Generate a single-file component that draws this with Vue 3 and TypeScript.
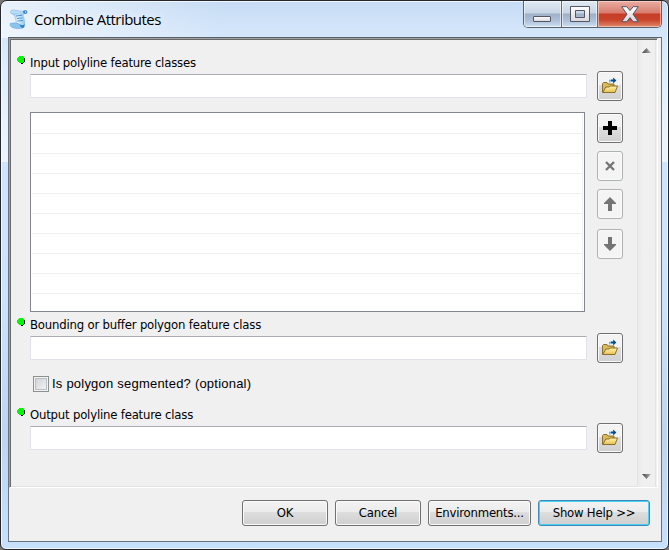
<script setup lang="ts">
import { ref } from 'vue'

interface Field {
  id: string
  label: string
}

const fields: Record<string, Field> = {
  input: { id: 'input', label: 'Input polyline feature classes' },
  bounds: { id: 'bounds', label: 'Bounding or buffer polygon feature class' },
  output: { id: 'output', label: 'Output polyline feature class' },
}
const segmented = ref(false)
const rows = Array.from({ length: 10 }, (_, i) => i)
</script>

<template>
  <svg class="defs" aria-hidden="true">
    <defs>
      <linearGradient id="gold" x1="0" y1="0" x2="0" y2="1">
        <stop offset="0" stop-color="#fff3b0" />
        <stop offset="1" stop-color="#e6c052" />
      </linearGradient>
      <linearGradient id="paper" x1="0" y1="0" x2="1" y2="0">
        <stop offset="0" stop-color="#8cc4ef" />
        <stop offset=".45" stop-color="#e2f3fd" />
        <stop offset="1" stop-color="#8fc4ee" />
      </linearGradient>
      <linearGradient id="glyph" x1="0" y1="0" x2="0" y2="1">
        <stop offset="0" stop-color="#ffffff" />
        <stop offset="1" stop-color="#d8d8dc" />
      </linearGradient>
      <linearGradient id="thumb" x1="0" y1="0" x2="1" y2="0">
        <stop offset="0" stop-color="#404040" />
        <stop offset="1" stop-color="#b5b5b5" />
      </linearGradient>
      <symbol id="folder" viewBox="0 0 18 18">
        <path d="M1.5 15.5V6.5l1-1h3.5l1 1.5h6v2.5" fill="#d9bb5c" stroke="#80651f" stroke-width=".9" />
        <path d="M1.8 15.5l3-5.5h3.4l1-1h7.3l-2.5 6.5z" fill="url(#gold)" stroke="#80651f" stroke-width=".9" />
        <path d="M8.7 5.5V3.5h1.5" fill="none" stroke="#54b6ea" stroke-width="1.3" />
        <path d="M10 2.6h2.2V.4l3.2 3-3.2 3V4.4H10z" fill="#064b8b" />
      </symbol>
      <symbol id="dot" viewBox="0 0 9 9">
        <path d="M3 1h4v1h1v4H7v1H6v1H4V7H3z" fill="#101010" />
        <path d="M2 0h4v1h1v5H6v1H2V6H1V5H0V2h1V1h1z" fill="#00f800" />
      </symbol>
    </defs>
  </svg>
  <main class="window">
    <header class="titlebar">
      <svg class="script-icon" viewBox="0 0 20 22">
        <path d="M3.5 5.5L15 3.5q-1.5 5 .5 9 1 5-1 7H6q2-2 1-6.500Q6.500 8 3.500 5.500z" fill="url(#paper)" stroke="#85b9e4" stroke-width=".5" />
        <path d="M1.500 3.500Q2 1.500 4.500 2L14 3.500q1.500 2-.5 2.500L4 6Q1 6 1.500 3.500z" fill="#b9ddf7" stroke="#74abdc" stroke-width=".5" />
        <path d="M14.500 2.500q3-1 3.800.8.500 2.700-2.300 2.700-2.500-.5-1.500-3.500z" fill="#2f7dca" />
        <path d="M15.800 3.500q1-.6 1.600.2.200 1-.8 1.200-.9-.2-.8-1.400z" fill="#cfe9fb" />
        <path d="M1 15.500q5-1.500 9.500.5 1 2.500 3.500 4-6 1.500-11-.5-2.500-1.500-2-4z" fill="#8cc3ee" stroke="#6aa4d8" stroke-width=".5" />
        <path d="M10.500 16q.5 3 3.500 4 2-1 1.500-4-1.500 2.500-5 0z" fill="#2f7dca" />
        <path d="M7 8l6-.7M8 10.500l5.500-.6M8.500 13l5.500-.5" stroke="#4b90cf" stroke-width="1" />
      </svg>
      <h1>Combine Attributes</h1>
      <div class="controls">
        <span class="control min">
          <svg width="19" height="7" viewBox="0 0 19 7"><rect x=".5" y=".5" width="17" height="5" rx=".5" fill="url(#glyph)" stroke="#535666" /></svg>
        </span>
        <span class="control max">
          <svg width="20" height="17" viewBox="0 0 20 17"><path fill-rule="evenodd" d="M.5.5h19v15H.5zM5.5 4.5v7h9v-7z" fill="url(#glyph)" stroke="#535666" /></svg>
        </span>
        <span class="control close">
          <svg width="18" height="17" viewBox="0 0 18 17"><path d="M.7.7h5.100L9 4.600 12.200.7h5.100L12 8.200l5.300 7.500h-5.100L9 11.600l-3.200 4.100H.7L6 8.200z" fill="url(#glyph)" stroke="#535666" stroke-linejoin="round" /></svg>
        </span>
      </div>
    </header>

    <section class="client">
      <div class="panel">
        <div class="form">
          <div class="label"><svg class="dot"><use href="#dot" /></svg><span>{{ fields.input.label }}</span></div>
          <div class="field">
            <input type="text" :aria-label="fields.input.label" />
            <button class="tool"><svg class="folder"><use href="#folder" /></svg></button>
          </div>
          <div class="list-row">
            <div class="list"><div v-for="r in rows" :key="r" class="row"></div></div>
            <div class="tools">
              <button class="tool"><svg width="14" height="14" viewBox="0 0 14 14"><path d="M5 0h4v5h5v4H9v5H5V9H0V5h5z" fill="#000" /></svg></button>
              <button class="tool off"><svg width="10" height="10" viewBox="0 0 10 10"><path d="M1 1l8 8M9 1L1 9" stroke="#747474" stroke-width="2.3" /></svg></button>
              <button class="tool off"><svg width="12" height="14" viewBox="0 0 12 14"><path d="M6 0l6 6v1H8v7H4V7H0V6z" fill="#747474" /></svg></button>
              <button class="tool off last"><svg width="12" height="14" viewBox="0 0 12 14"><path d="M4 0h4v7h4v1l-6 6-6-6V7h4z" fill="#747474" /></svg></button>
            </div>
          </div>
          <div class="label second"><svg class="dot"><use href="#dot" /></svg><span>{{ fields.bounds.label }}</span></div>
          <div class="field">
            <input type="text" :aria-label="fields.bounds.label" />
            <button class="tool"><svg class="folder"><use href="#folder" /></svg></button>
          </div>
          <label class="check">
            <input v-model="segmented" type="checkbox" />
            <span>Is polygon segmented? (optional)</span>
          </label>
          <div class="label third"><svg class="dot"><use href="#dot" /></svg><span>{{ fields.output.label }}</span></div>
          <div class="field">
            <input type="text" :aria-label="fields.output.label" />
            <button class="tool"><svg class="folder"><use href="#folder" /></svg></button>
          </div>
        </div>
        <div class="scroll">
          <svg width="9" height="5" viewBox="0 0 9 5"><path d="M0 5l4.5-5L9 5z" fill="url(#thumb)" /></svg>
          <svg width="9" height="5" viewBox="0 0 9 5"><path d="M0 0l4.5 5L9 0z" fill="url(#thumb)" /></svg>
        </div>
      </div>
      <footer>
        <button class="btn ok"><span>OK</span></button>
        <button class="btn cancel"><span>Cancel</span></button>
        <button class="btn env"><span>Environments...</span></button>
        <button class="btn help"><span>Show Help &gt;&gt;</span></button>
      </footer>
    </section>
  </main>
</template>

<style>
body { overflow: hidden; background: #777; }
</style>

<style scoped>
* { box-sizing: border-box; }
.defs { position: absolute; width: 0; height: 0; }
.window {
  width: 669px; height: 550px; padding: 0 6px 6px 7px;
  border: 1px solid #24282e; border-radius: 7px 7px 6px 6px;
  display: flex; flex-direction: column;
  background:
    linear-gradient(90deg, rgba(255,255,255,.6), transparent 220px) 0 0 / 100% 37px no-repeat,
    linear-gradient(180deg, transparent 0, rgba(238,245,252,.85) 120px, rgba(240,246,252,.9) 161px, transparent 161px),
    linear-gradient(180deg, #c6dcf4 0, #d1e6fd 60px, #cce3fc 300px, #bdd5ef 430px, #c7e0fb 100%);
  box-shadow: inset 0 0 0 1px rgba(255,255,255,.75);
}
.titlebar { height: 36px; display: flex; align-items: flex-start; flex: none; }
.script-icon { width: 20px; height: 22px; margin: 7px 0 0 1px; }
h1 { margin: 8px 0 0 5px; font: 400 15px/21px "Open Sans", "Noto Sans", sans-serif; letter-spacing: -.52px; color: #000; white-space: nowrap; text-shadow: 0 0 8px #fff; }
.controls { display: flex; width: 139px; height: 27px; margin-left: auto; border: 1px solid #596273; border-top: 0; border-radius: 0 0 5px 5px; overflow: hidden; }
.control { height: 26px; display: flex; justify-content: center; border-right: 1px solid #626c7d; background: linear-gradient(#e0eaf5 0, #c7d4e3 12px, #9fb0c6 13px, #afc2da 20px, #cfe0f1); box-shadow: inset 0 0 0 1px rgba(255,255,255,.55); }
.min { width: 38px; padding-top: 15px; }
.max { width: 36px; padding-top: 5px; }
.close { width: 63px; padding-top: 5px; border-right: 0; background: linear-gradient(#e9aea5 0, #d87b6d 12px, #c63c26 13px, #c9452c 19px, #df8b70); box-shadow: inset 0 0 0 1px rgba(255,220,205,.6); }
.control svg { display: block; flex: none; }

.client { height: 505px; width: 654px; border: 1px solid #6b7480; border-top-color: #59616b; background: #f0f0f0; color: #000; }
.panel { height: 450px; width: 649px; padding: 1px 0 0 1px; display: flex; border: 1px solid #fff; border-top-color: #a0a0a0; border-left-color: #a0a0a0; box-shadow: inset 1px 1px #696969, inset 0 -1px #e3e3e3; }
.form { width: 626px; flex: none; padding: 14px 0 0 6px; }
.label { height: 17px; display: flex; align-items: flex-start; font: 13px/17px "DejaVu Sans Condensed", "DejaVu Sans", sans-serif; letter-spacing: -.2px; white-space: nowrap; }
.label span { margin-left: 4px; }
.dot { width: 9px; height: 9px; flex: none; margin-top: 2px; }
.field { height: 30px; padding-left: 13px; display: flex; align-items: center; gap: 10px; }
.field input { width: 557px; height: 24px; padding: 0 4px; border: 1px solid #e2e3ea; border-top-color: #abadb3; border-radius: 1px; background: #fff; outline: none; }
.tool { width: 26px; height: 30px; padding: 0; display: flex; align-items: center; justify-content: center; flex: none; border: 1px solid #707070; border-radius: 3px; background: linear-gradient(#f3f3f3 0 47%, #dedede 48%, #d0d0d0); box-shadow: inset 0 0 0 1px #fafafa; }
.folder { width: 18px; height: 18px; }
.tool.off { border-color: #adb2b5; background: #f4f4f4; }
.list-row { height: 200px; margin-top: 11px; padding-left: 13px; display: flex; gap: 12px; }
.list { width: 555px; height: 200px; padding: 1px 1px 0 1px; border: 1px solid #828790; background: #fff; overflow: hidden; }
.row { height: 20px; border-bottom: 1px solid #f0f0f0; border-right: 1px solid #f0f0f0; }
.tools { padding-top: 1px; display: flex; flex-direction: column; gap: 8px; }
.tools .last { margin-top: 2px; }
.second { margin-top: 4px; }
.check { height: 17px; margin: 12px 0 0 16px; display: flex; align-items: center; font: 13px/17px "Liberation Sans", Arial, sans-serif; letter-spacing: .22px; white-space: nowrap; }
.check input { appearance: none; width: 16px; height: 16px; margin: 0 3px 0 0; border: 1px solid #8e8f8f; background: linear-gradient(135deg, #cbcfd5, #f6f6f6); box-shadow: inset 0 0 0 1px #f4f4f4, inset 0 0 0 2px #b9bec5; }
.third { margin-top: 14px; }
.scroll { width: 19px; padding: 8px 4px 8px; display: flex; flex-direction: column; justify-content: space-between; border-left: 1px solid #e3e3e3; border-right: 1px solid #e3e3e3; background: linear-gradient(90deg, #eaeaea, #f0f0f0 5px, #efefef); }

footer { height: 53px; padding: 12px 0 0 233px; display: flex; gap: 7px; }
.btn { height: 26px; padding: 0 0 1px; flex: none; border: 1px solid #707070; border-radius: 3px; background: linear-gradient(#f3f3f3 0, #ebebeb 47%, #dddddd 48%, #cfcfcf); box-shadow: inset 0 0 0 1px #fafafa; color: #000; font: 13px/16px "DejaVu Sans Condensed", "DejaVu Sans", sans-serif; letter-spacing: -.22px; white-space: nowrap; }
.ok, .cancel { width: 86px; }
.env { width: 103px; }
.help { width: 112px; border-color: #3c8ab5; box-shadow: inset 0 0 0 1px #48d1f5; }
</style>
